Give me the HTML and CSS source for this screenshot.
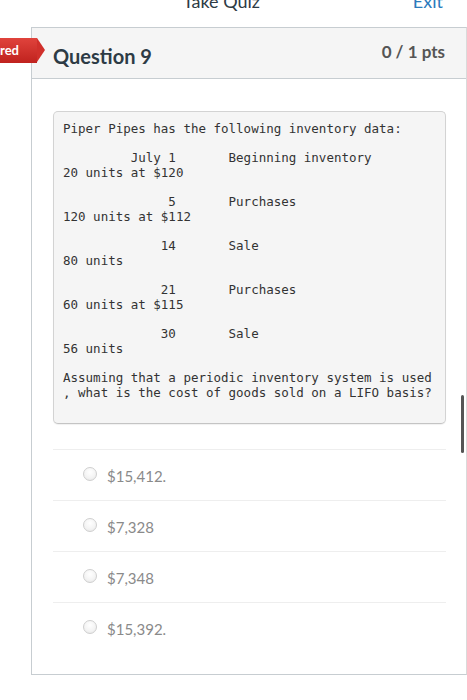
FILE: index.html
```html
<!DOCTYPE html>
<html lang="en">
<head>
<meta charset="utf-8">
<title>Take Quiz</title>
<link rel="stylesheet" href="styles.css">
</head>
<body>
<div class="topbar">
  <span></span>
  <span class="title">Take Quiz</span>
  <a class="exit" href="#">Exit</a>
</div>
<div class="layout">
  <div class="tag">red</div>
  <div class="question">
    <div class="qheader">
      <h2 class="qname">Question 9</h2>
      <span class="pts">0 / 1 pts</span>
    </div>
    <div class="qbody">
<pre class="qtext">Piper Pipes has the following inventory data:

         July 1       Beginning inventory
20 units at $120

              5       Purchases
120 units at $112

             14       Sale
80 units

             21       Purchases
60 units at $115

             30       Sale
56 units

Assuming that a periodic inventory system is used
, what is the cost of goods sold on a LIFO basis?</pre>
      <div class="answers">
        <label class="answer"><span class="radio"></span><span class="atext">$15,412.</span></label>
        <label class="answer"><span class="radio"></span><span class="atext">$7,328</span></label>
        <label class="answer"><span class="radio"></span><span class="atext">$7,348</span></label>
        <label class="answer"><span class="radio"></span><span class="atext">$15,392.</span></label>
      </div>
    </div>
  </div>
  <div class="scrollbar"></div>
</div>
</body>
</html>
```
FILE: styles.css
```css
* { box-sizing: border-box; }
html, body { margin: 0; padding: 0; background: #fff; }
body {
  font-family: Lato, "Open Sans", "Liberation Sans", sans-serif;
  color: #2d3b45;
  width: 467px;
  height: 700px;
  overflow: hidden;
}
.topbar {
  height: 27px;
  display: grid;
  grid-template-columns: 1fr auto 1fr;
  align-items: start;
  padding-right: 24px;
}
.title, .exit {
  font-size: 18px;
  line-height: 22px;
  margin-top: -10px;
}
.title { color: #2d3b45; }
.exit {
  justify-self: end;
  color: #2b7abc;
  text-decoration: none;
}
.layout {
  position: relative;
  padding-left: 31px;
}
.tag {
  position: absolute;
  left: 0;
  top: 11px;
  width: 37px;
  height: 25px;
  background: linear-gradient(#e0433c, #c0221e);
  color: #fff;
  font-weight: 700;
  font-size: 13px;
  line-height: 25px;
  padding-right: 20px;
  text-align: right;
  z-index: 2;
}
.tag::after {
  content: "";
  position: absolute;
  right: -8px;
  top: 0;
  border-top: 12.5px solid transparent;
  border-bottom: 12.5px solid transparent;
  border-left: 8px solid #d0302b;
}
.question {
  width: 436px;
  border: 1px solid #c7cdd1;
  border-right-color: #dadada;
}
.qheader {
  height: 51px;
  background: #f5f5f5;
  border-bottom: 1px solid #c7cdd1;
  display: flex;
  justify-content: space-between;
  align-items: flex-start;
  padding: 0 21px;
}
.qname {
  margin: 16px 0 0;
  font-size: 20px;
  line-height: 24px;
  font-weight: 700;
  color: #2d3b45;
}
.pts {
  margin-top: 14px;
  font-size: 17px;
  line-height: 20px;
  font-weight: 700;
  color: #555;
}
.qbody {
  padding: 32px 20px 21px 21px;
}
.qtext {
  margin: 0;
  background: #f5f5f5;
  border: 1px solid #d3d3d3;
  border-bottom-color: #c4c4c4;
  border-radius: 5px;
  box-shadow: 0 1px 1px rgba(0,0,0,0.06);
  padding: 10px 9px 23px;
  font-family: "DejaVu Sans Mono", "Liberation Mono", monospace;
  font-size: 12.5px;
  line-height: 14.65px;
  color: #333;
  white-space: pre;
  overflow: hidden;
}
.answers {
  margin-top: 25px;
}
.answer {
  display: flex;
  align-items: flex-start;
  gap: 10px;
  height: 51px;
  border-top: 1px solid #eeeeee;
  padding: 17px 0 0 30px;
}
.radio {
  width: 14px;
  height: 14px;
  border-radius: 50%;
  border: 1px solid #cfcfcf;
  background: radial-gradient(circle at 50% 35%, #ffffff 0%, #f3f3f3 60%, #e2e2e2 100%);
  flex: none;
}
.atext {
  font-size: 15px;
  line-height: 18px;
  color: #8a8a8a;
}
.scrollbar {
  position: absolute;
  left: 461px;
  top: 368px;
  width: 3px;
  height: 58px;
  border-radius: 2px;
  background: #555;
}
```
